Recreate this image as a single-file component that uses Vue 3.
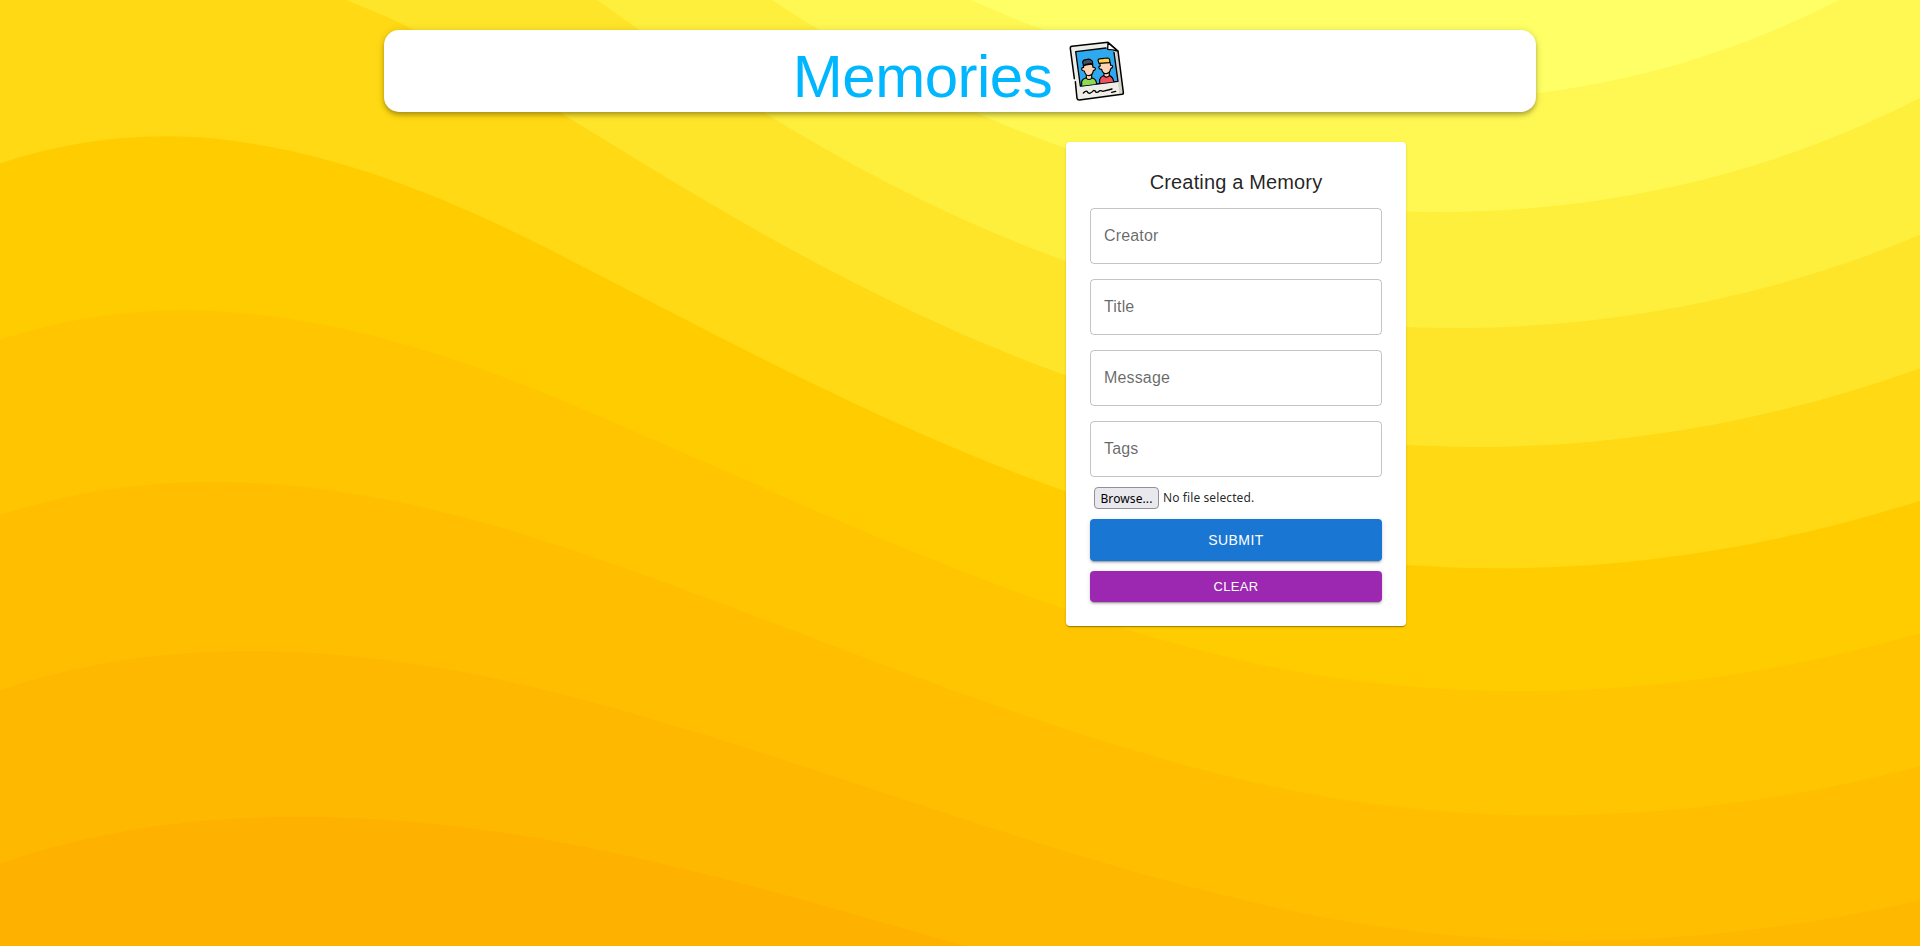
<script setup>
const fields = ['Creator', 'Title', 'Message', 'Tags']
</script>

<template>
  <div class="page">
    <svg class="backdrop" viewBox="0 0 1600 800" preserveAspectRatio="xMinYMin slice" aria-hidden="true">
      <rect fill="#ffaa00" width="1600" height="800" />
      <path fill="#ffb100" d="M486 705.8c-109.3-21.8-223.4-32.2-335.3-19.4C99.5 692.1 49 703 0 719.8V800h843.8c-115.9-33.2-230.8-68.1-347.6-92.2C492.8 707.1 489.4 706.5 486 705.8z" />
      <path fill="#ffb800" d="M1600 0H0v719.8c49-16.8 99.5-27.8 150.7-33.5c111.9-12.7 226-2.4 335.3 19.4c3.4 0.7 6.8 1.4 10.2 2c116.8 24 231.7 59 347.6 92.2H1600V0z" />
      <path fill="#ffbf00" d="M478.4 581c3.2 0.8 6.4 1.7 9.5 2.5c196.2 52.5 388.7 133.5 593.5 176.6c174.2 36.6 349.5 29.2 518.6-10.2V0H0v574.9c52.3-17.6 106.5-27.7 161.1-30.9C268.4 537.4 375.7 554.2 478.4 581z" />
      <path fill="#ffc500" d="M0 0v429.4c55.6-18.4 113.5-27.3 171.4-27.7c102.8-0.8 203.2 22.7 299.3 54.5c3 1 5.9 2 8.9 3c183.6 62 365.7 146.1 562.4 192.1c186.7 43.7 376.3 34.4 557.9-12.6V0H0z" />
      <path fill="#ffcc00" d="M181.8 259.4c98.2 6 191.9 35.2 281.3 72.1c2.8 1.1 5.5 2.3 8.3 3.4c171 71.6 342.7 158.5 531.3 207.7c198.8 51.8 403.4 40.8 597.3-14.8V0H0v283.2C59 263.6 120.6 255.7 181.8 259.4z" />
      <path fill="#ffd914" d="M1600 0H0v136.3c62.3-20.9 127.7-27.5 192.2-19.2c93.6 12.1 180.5 47.7 263.3 89.6c2.6 1.3 5.1 2.6 7.7 3.9c158.4 81.1 319.7 170.9 500.3 223.2c210.5 61 430.8 49 636.6-16.6V0z" />
      <path fill="#ffe529" d="M454.9 86.3C600.7 177 751.6 269.3 924.1 325c208.6 67.4 431.3 60.8 637.9-5.3c12.8-4.1 25.4-8.4 38.1-12.9V0H288.1c56 21.3 108.7 50.6 159.7 82C450.2 83.4 452.5 84.9 454.9 86.3z" />
      <path fill="#ffef3d" d="M1600 0H498c118.1 85.8 243.5 164.5 386.8 216.2c191.8 69.2 400 74.7 595 21.1c40.8-11.2 81.1-25.2 120.3-41.7V0z" />
      <path fill="#fff852" d="M1397.5 154.8c47.2-10.6 93.6-25.3 138.6-43.8c21.7-8.9 43-18.8 63.9-29.5V0H643.4c62.9 41.7 129.7 78.2 202.1 107.4C1020.4 178.1 1214.2 196.1 1397.5 154.8z" />
      <path fill="#ffff66" d="M1315.3 72.4c75.3-12.6 148.9-37.1 216.8-72.4h-723C966.8 71 1144.7 101 1315.3 72.4z" />
    </svg>

    <div class="container">
      <header class="app-bar">
        <h1 class="heading">Memories</h1>
        <svg class="logo" viewBox="21 33 180 180" aria-hidden="true" fill="none" stroke="#000" stroke-width="4.5" stroke-linecap="round" stroke-linejoin="round">
          <path fill="#efede8" stroke="none" d="M31 54Q31 50 36 49L144 37L174 62L190 188Q190 192 186 193L58 210Q52 210 51 205Z" />
          <path fill="#d6d2cc" stroke="none" d="M165 62L174 62L190 188Q190 192 186 193L178 194Z" />
          <path fill="#2fa9ee" stroke="none" d="M47 65L143 53L150 61L162 62L174 155L61 170Z" />
          <path d="M138 54L47 65L61 168L174 154L162 67" stroke-width="4" />
          <path fill="#8edb52" stroke="none" d="M65 167V155Q67 147 77 144H97Q107 147 109 156V162Z" />
          <path fill="#f4505a" stroke="none" d="M119 160V149Q121 140 130 137H148Q158 140 161 155Z" />
          <path stroke-width="3.4" d="M65 166V155Q67 147 77 144H97Q107 147 109 156V161M119 159V149Q121 140 130 137H148Q158 140 161 154" />
          <path fill="#ffd3b3" stroke-width="3.4" d="M79 134V145Q87 152 95 145V134M132 127V138Q140 145 148 137V127" />
          <path fill="#ffd3b3" stroke-width="3.4" d="M70 106L71 112Q64 113 65 118Q66 123 73 123Q76 137 87 137Q98 136 100 122Q107 120 106 115Q104 111 99 112L97 102Z" />
          <path fill="#ffd3b3" stroke-width="3.4" d="M119 98L121 108Q115 109 117 114Q118 118 125 118Q128 131 139 131Q150 130 152 116Q159 113 158 108Q156 105 152 106L150 96Z" />
          <path fill="#46505f" stroke-width="3.4" d="M71 108L68 97Q69 89 79 89Q86 85 93 90Q99 93 98 106L94 101L78 103Z" />
          <path fill="#ffd24d" stroke-width="3.4" d="M117 100L114 91Q115 85 126 86Q134 84 143 84Q151 85 149 98Z" />
          <path d="M46 155L51 205Q52 210 58 210L186 193Q191 192 190 187L174 63L144 37L36 49Q30 50 31 56L43 146" />
          <path fill="#fff" stroke-width="4" d="M144 38L143 58Q157 58 173 63Z" />
          <path stroke-width="4" d="M70 189Q77 182 81 184Q84 190 89 190Q96 187 101 181Q106 181 108 187Q113 188 119 182Q124 181 128 184Q144 180 156 177M155 187L167 184" />
        </svg>
      </header>

      <main class="content">
        <form class="card" @submit.prevent>
          <h2 class="card-title">Creating a Memory</h2>
          <div class="fields">
            <div v-for="label in fields" :key="label" class="field">{{ label }}</div>
          </div>
          <div class="file-row">
            <span class="browse">Browse...</span>
            <span class="file-name">No file selected.</span>
          </div>
          <button class="button submit" type="submit">Submit</button>
          <button class="button clear" type="button">Clear</button>
        </form>
      </main>
    </div>
  </div>
</template>

<style>
body {
  margin: 0;
  background: #ffaa00;
}
</style>

<style scoped>
.page {
  position: relative;
  height: 100vh;
  overflow: hidden;
  font-family: "Liberation Sans", Arial, sans-serif;
}

.backdrop {
  position: absolute;
  inset: 0;
  width: 100%;
  height: 100%;
}

.container {
  position: relative;
  width: 1152px;
  margin: 0 auto;
  padding-top: 30px;
}

.app-bar {
  display: flex;
  justify-content: center;
  align-items: flex-start;
  box-sizing: border-box;
  height: 82px;
  border-radius: 15px;
  background: #fff;
  box-shadow: 0 2px 4px -1px rgba(0, 0, 0, 0.2), 0 4px 5px rgba(0, 0, 0, 0.14), 0 1px 10px rgba(0, 0, 0, 0.12);
}

.heading {
  margin: 11px 0 0;
  color: #00b7ff;
  font-size: 60px;
  font-weight: 400;
  line-height: 72px;
  letter-spacing: -0.00833em;
}

.logo {
  width: 60px;
  height: 60px;
  margin: 11px 0 0 15px;
}

.content {
  display: flex;
  justify-content: flex-end;
  padding: 30px 130px 0 0;
}

.card {
  display: flex;
  flex-direction: column;
  box-sizing: border-box;
  width: 340px;
  height: 484px;
  padding: 24px;
  border-radius: 4px;
  background: #fff;
  box-shadow: 0 2px 1px -1px rgba(0, 0, 0, 0.2), 0 1px 1px rgba(0, 0, 0, 0.14), 0 1px 3px rgba(0, 0, 0, 0.12);
}

.card-title {
  margin: 0 0 10px;
  color: rgba(0, 0, 0, 0.87);
  font-size: 20px;
  font-weight: 400;
  line-height: 32px;
  letter-spacing: 0.0075em;
  text-align: center;
}

.fields {
  display: flex;
  flex-direction: column;
  gap: 15px;
}

.field {
  box-sizing: border-box;
  height: 56px;
  padding: 0 13px;
  border: 1px solid rgba(0, 0, 0, 0.23);
  border-radius: 4px;
  color: rgba(0, 0, 0, 0.6);
  font-size: 16px;
  line-height: 54px;
  letter-spacing: 0.00938em;
}

.file-row {
  display: flex;
  align-items: center;
  gap: 4px;
  margin: 10px 4px;
  height: 22px;
  font-family: "Noto Sans", sans-serif;
  font-size: 12px;
  letter-spacing: 0.1px;
  white-space: nowrap;
}

.browse {
  box-sizing: border-box;
  width: 65px;
  height: 22px;
  border: 1px solid #8f8f9d;
  border-radius: 4px;
  background: #e9e9ed;
  color: #000;
  line-height: 22px;
  text-align: center;
}

.file-name {
  color: rgba(0, 0, 0, 0.87);
  line-height: 24px;
}

.button {
  border: 0;
  border-radius: 4px;
  padding: 0;
  color: #fff;
  font-family: inherit;
  font-weight: 500;
  letter-spacing: 0.02857em;
  text-transform: uppercase;
  box-shadow: 0 3px 1px -2px rgba(0, 0, 0, 0.2), 0 2px 2px rgba(0, 0, 0, 0.14), 0 1px 5px rgba(0, 0, 0, 0.12);
}

.submit {
  height: 42px;
  margin-bottom: 10px;
  background: #1976d2;
  font-size: 14px;
}

.clear {
  height: 31px;
  background: #9c27b0;
  font-size: 13px;
}
</style>
